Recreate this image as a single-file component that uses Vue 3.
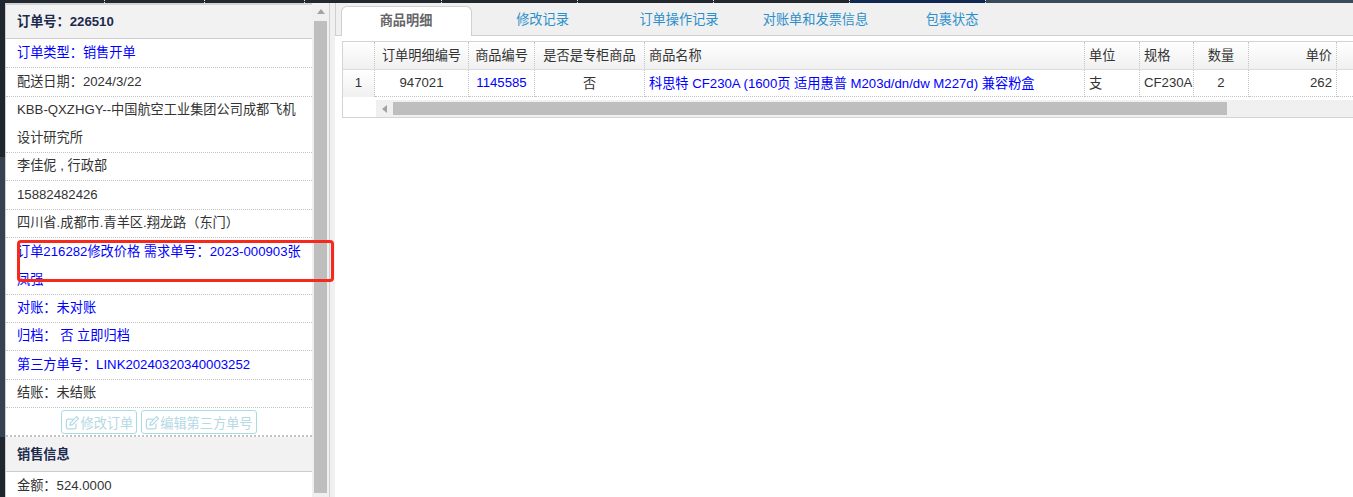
<script setup>
const topSegments = [
  { width: 105, color: '#22282e' },
  { width: 100, color: '#22282e' },
  { width: 100, color: '#22282e' },
  { width: 137, color: '#22282e' },
  { width: 136, color: '#22282e' },
  { width: 136, color: '#22282e' },
  { width: 136, color: '#22282e' },
  { width: 136, color: '#10284f' },
  { width: 367, color: '#3a4a57' },
];

const orderRows = [
  { text: '订单类型：销售开单', blue: true },
  { text: '配送日期：2024/3/22' },
  { text: 'KBB-QXZHGY--中国航空工业集团公司成都飞机设计研究所', wrap: true },
  { text: '李佳伲 , 行政部' },
  { text: '15882482426' },
  { text: '四川省.成都市.青羊区.翔龙路（东门）' },
  { text: '订单216282修改价格 需求单号：2023-000903张凤强', blue: true, wrap: true },
  { text: '对账：未对账', blue: true },
  { text: '归档： 否 立即归档', blue: true },
  { text: '第三方单号：LINK20240320340003252', blue: true },
  { text: '结账：未结账' },
];

const tabs = ['商品明细', '修改记录', '订单操作记录', '对账单和发票信息', '包裹状态'];
const colWidths = [32, 94, 66, 110, 440, 55, 54, 55, 88, 40];
</script>

<template>
  <div class="page">
    <div class="topbar">
      <div
        v-for="(seg, i) in topSegments"
        :key="i"
        class="top-seg"
        :style="{ width: seg.width + 'px', background: seg.color }"
      ></div>
    </div>

    <div class="main">
      <div class="strip">
        <div class="strip-dark strip-first"></div>
        <div class="strip-mid"></div>
        <div class="strip-dark strip-last"></div>
      </div>

      <div class="left">
        <div class="left-content">
          <div class="sec-title">订单号：226510</div>
          <div
            v-for="row in orderRows"
            :key="row.text"
            class="row"
            :class="{ blue: row.blue, wrapped: row.wrap }"
          >{{ row.text }}</div>
          <div class="row-btns">
            <a class="btn">
              <svg class="pen" viewBox="0 0 15 15" fill="none" stroke="currentColor" stroke-width="1.2">
                <path d="M11 8.5V12.2A1.6 1.6 0 0 1 9.4 13.8H3A1.6 1.6 0 0 1 1.4 12.2V5.8A1.6 1.6 0 0 1 3 4.2H8" />
                <path d="M5.5 7.8L11.6 1.7L13.5 3.6L7.4 9.7L5 10.2Z" />
              </svg>修改订单
            </a>
            <a class="btn">
              <svg class="pen" viewBox="0 0 15 15" fill="none" stroke="currentColor" stroke-width="1.2">
                <path d="M11 8.5V12.2A1.6 1.6 0 0 1 9.4 13.8H3A1.6 1.6 0 0 1 1.4 12.2V5.8A1.6 1.6 0 0 1 3 4.2H8" />
                <path d="M5.5 7.8L11.6 1.7L13.5 3.6L7.4 9.7L5 10.2Z" />
              </svg>编辑第三方单号
            </a>
          </div>
          <div class="sec-title sec-second">销售信息</div>
          <div class="row row-last">金额：524.0000</div>
        </div>
        <div class="vscroll">
          <div class="arrow-up"></div>
          <div class="vthumb"></div>
        </div>
      </div>

      <div class="splitter"></div>

      <div class="right">
        <div class="tabs">
          <div v-for="(tab, i) in tabs" :key="tab" class="tab" :class="{ active: i === 0 }">{{ tab }}</div>
        </div>
        <div class="grid-wrap">
          <table class="grid">
            <colgroup>
              <col v-for="(w, i) in colWidths" :key="i" :style="{ width: w + 'px' }" />
            </colgroup>
            <thead>
              <tr>
                <th></th>
                <th>订单明细编号</th>
                <th>商品编号</th>
                <th>是否是专柜商品</th>
                <th class="al">商品名称</th>
                <th class="al">单位</th>
                <th class="al">规格</th>
                <th>数量</th>
                <th class="ar">单价</th>
                <th></th>
              </tr>
            </thead>
            <tbody>
              <tr>
                <td class="num">1</td>
                <td>947021</td>
                <td class="link">1145585</td>
                <td>否</td>
                <td class="al link">科思特 CF230A (1600页 适用惠普 M203d/dn/dw M227d) 兼容粉盒</td>
                <td class="al">支</td>
                <td class="al">CF230A</td>
                <td>2</td>
                <td class="ar">262</td>
                <td></td>
              </tr>
            </tbody>
          </table>
          <div class="hscroll">
            <div class="hscroll-blank"></div>
            <div class="hscroll-track">
              <div class="arrow-left-box"><div class="arrow-left"></div></div>
              <div class="hthumb"></div>
            </div>
          </div>
        </div>
      </div>
    </div>

    <div class="callout"></div>
  </div>
</template>

<style scoped>
.page {
  position: relative;
  width: 1353px;
  height: 497px;
  overflow: hidden;
  display: flex;
  flex-direction: column;
  background: #fff;
  font-family: "Liberation Sans", "Noto Sans CJK SC", sans-serif;
  font-size: 13.2px;
  color: #333;
}
.topbar {
  display: flex;
  height: 3px;
  flex: none;
}
.top-seg {
  box-sizing: border-box;
  border-right: 1px dotted #ddd;
}
.top-seg:last-child {
  border-right: 0;
}
.main {
  flex: 1;
  display: flex;
  min-height: 0;
}
.strip {
  width: 5px;
  flex: none;
  display: flex;
  flex-direction: column;
}
.strip-dark {
  background: #1f262e;
}
.strip-first {
  height: 154px;
}
.strip-mid {
  height: 280px;
  background: #34434f;
}
.strip-last {
  flex: 1;
}
.left {
  width: 325px;
  flex: none;
  display: flex;
  box-sizing: border-box;
  border-left: 1px solid #ccc;
  border-right: 1px solid #d0d0d0;
}
.left-content {
  width: 306px;
  flex: none;
  display: flex;
  flex-direction: column;
  overflow: hidden;
}
.left-content > * {
  flex: none;
}
.sec-title {
  box-sizing: border-box;
  height: 36px;
  padding-left: 11px;
  border-top: 2px solid #d4d4d4;
  border-bottom: 1px solid #ccc;
  background: #f2f2f2;
  color: #1c2a4e;
  font-weight: bold;
  line-height: 33px;
}
.sec-second {
  height: 35px;
  border-top: 0;
  line-height: 36px;
}
.row {
  padding: 0 11px;
  margin-bottom: -0.5px;
  line-height: 28px;
  border-bottom: 1px dotted #c4c4c4;
}
.row.wrapped {
  margin-bottom: -1px;
}
.row.blue {
  color: #00f;
}
.row-last {
  border-bottom: 0;
}
.row-btns {
  height: 29.5px;
  box-sizing: border-box;
  padding-top: 2.5px;
  display: flex;
  justify-content: center;
  gap: 4px;
  border-bottom: 2px dotted #c4c4c4;
}
.btn {
  box-sizing: border-box;
  height: 24px;
  display: flex;
  align-items: center;
  padding: 0 3px;
  border: 1px solid #a8dbe8;
  border-radius: 3px;
  color: #b3d9e6;
  white-space: nowrap;
}
.pen {
  width: 15px;
  height: 15px;
}
.vscroll {
  width: 17px;
  flex: none;
  display: flex;
  flex-direction: column;
  align-items: center;
  background: #f0f0f0;
}
.arrow-up {
  width: 0;
  height: 0;
  margin: 6px 0 7px;
  border: 4px solid transparent;
  border-top: 0;
  border-bottom: 5px solid #a3a3a3;
}
.vthumb {
  width: 13px;
  height: 472px;
  background: #bebebe;
}
.splitter {
  width: 5px;
  flex: none;
  background: #f0f0f0;
}
.right {
  flex: 1;
  min-width: 0;
  overflow: hidden;
}
.tabs {
  box-sizing: border-box;
  height: 33px;
  display: flex;
  gap: 5.5px;
  padding: 3px 0 0 4.5px;
  background: #f0f0f0;
  border-left: 1px solid #d0d0d0;
  border-bottom: 1px solid #d0d0d0;
}
.tab {
  box-sizing: border-box;
  width: 131px;
  flex: none;
  height: 30px;
  margin-bottom: -1px;
  text-align: center;
  line-height: 28px;
  color: #2b8fcb;
}
.tab.active {
  background: #fff;
  border: 1px solid #d0d0d0;
  border-bottom: 0;
  border-radius: 6px 6px 0 0;
  color: #666;
  font-weight: bold;
}
.grid-wrap {
  box-sizing: border-box;
  width: 1100px;
  margin: 5px 0 0 7px;
  border: 1px solid #d4d4d4;
  border-right: 0;
}
.grid {
  table-layout: fixed;
  width: 1034px;
  border-collapse: separate;
  border-spacing: 0;
}
.grid th,
.grid td {
  box-sizing: border-box;
  padding: 0 4px 2px;
  text-align: center;
  white-space: nowrap;
  overflow: hidden;
  border-right: 1px dotted #c4c4c4;
  font-weight: normal;
}
.grid th {
  height: 28px;
  background: linear-gradient(#fff, #f0f0f0);
  border-bottom: 1px solid #ddd;
}
.grid td {
  height: 27px;
  border-bottom: 1px dotted #c4c4c4;
}
.grid .al {
  text-align: left;
}
.grid .ar {
  text-align: right;
}
.grid .link {
  color: #00f;
}
.grid .num {
  background: linear-gradient(#fff, #f0f0f0);
  border-bottom: 0;
}
.hscroll {
  display: flex;
  height: 20px;
}
.hscroll-blank {
  width: 33px;
  flex: none;
}
.hscroll-track {
  flex: 1;
  display: flex;
  align-items: center;
  margin-top: 3px;
  height: 17px;
  background: #f0f0f0;
}
.arrow-left-box {
  width: 17px;
  display: flex;
  justify-content: center;
  flex: none;
}
.arrow-left {
  width: 0;
  height: 0;
  border: 4px solid transparent;
  border-left: 0;
  border-right: 5px solid #a3a3a3;
}
.hthumb {
  width: 834px;
  height: 13px;
  background: #bebebe;
}
.callout {
  position: absolute;
  left: 17px;
  top: 240px;
  width: 317px;
  height: 42px;
  box-sizing: border-box;
  border: 3px solid #f52a1c;
  border-radius: 4px;
}
</style>

<style>
html,
body {
  margin: 0;
  overflow: hidden;
}
</style>
